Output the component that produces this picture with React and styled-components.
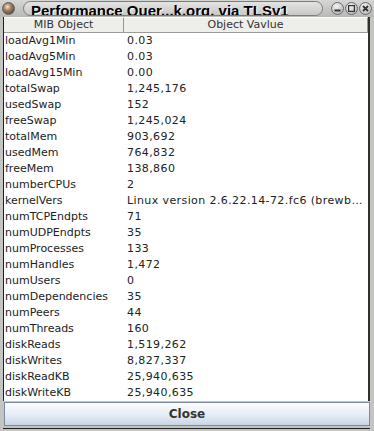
import React from "react";
import styled, { createGlobalStyle } from "styled-components";

const Global = createGlobalStyle`
  html, body { margin: 0; padding: 0; background: #c4c4c0; }
  body { width: 374px; height: 431px; overflow: hidden; }
`;

const rows = [
  ["loadAvg1Min", "0.03"],
  ["loadAvg5Min", "0.03"],
  ["loadAvg15Min", "0.00"],
  ["totalSwap", "1,245,176"],
  ["usedSwap", "152"],
  ["freeSwap", "1,245,024"],
  ["totalMem", "903,692"],
  ["usedMem", "764,832"],
  ["freeMem", "138,860"],
  ["numberCPUs", "2"],
  ["kernelVers", "Linux version 2.6.22.14-72.fc6 (brewbuilder@hs20-bc2-4.build.redhat.com)"],
  ["numTCPEndpts", "71"],
  ["numUDPEndpts", "35"],
  ["numProcesses", "133"],
  ["numHandles", "1,472"],
  ["numUsers", "0"],
  ["numDependencies", "35"],
  ["numPeers", "44"],
  ["numThreads", "160"],
  ["diskReads", "1,519,262"],
  ["diskWrites", "8,827,337"],
  ["diskReadKB", "25,940,635"],
  ["diskWriteKB", "25,940,635"],
];

const Window = styled.div`
  width: 374px;
  height: 431px;
  display: flex;
  flex-direction: column;
  background: #c4c4c0;
  box-sizing: border-box;
  font-family: "DejaVu Sans", sans-serif;
`;

const TitleBar = styled.div`
  height: 17px;
  display: flex;
  align-items: center;
  padding: 0 2px 0 2px;
  gap: 4px;
  background: linear-gradient(#d6d6d4, #b8b8b6);
  overflow: hidden;
`;

const Orb = styled.div`
  width: 13px;
  height: 13px;
  border-radius: 50%;
  flex: none;
  background: radial-gradient(circle at 40% 35%, #f0e4d8 0%, #a07c60 40%, #4a3020 100%);
  border: 1px solid #606060;
  box-sizing: border-box;
`;

const TitlePill = styled.div`
  flex: 1;
  height: 15px;
  margin-left: 4px;
  border: 1px solid #7c7c7c;
  border-radius: 8px;
  background: linear-gradient(#e4e4e2, #c8c8c6);
  display: flex;
  align-items: center;
  padding-left: 7px;
  box-sizing: border-box;
  overflow: hidden;
`;

const TitleText = styled.span`
  font-family: "Liberation Sans", Arial, sans-serif;
  font-weight: bold;
  font-size: 15px;
  line-height: 15px;
  color: #000;
  white-space: nowrap;
  text-shadow: 1px 1px 0 #fff;
  margin-top: 3px;
`;

const Controls = styled.div`
  display: flex;
  gap: 1px;
  margin-left: 4px;
`;

const CtrlBtn = styled.div`
  width: 13px;
  height: 13px;
  border-radius: 50%;
  border: 1px solid #6c6c6c;
  box-sizing: border-box;
  background: radial-gradient(circle at 40% 30%, #f4f4f4, #a8a8a8);
  display: flex;
  align-items: center;
  justify-content: center;
`;

const Body = styled.div`
  flex: 1;
  display: flex;
  flex-direction: column;
  padding: 0 4px 0 3px;
  min-height: 0;
`;

const Table = styled.div`
  flex: none;
  background: #fff;
  border-left: 1px solid #202020;
  border-right: 2px solid #303030;
  display: flex;
  flex-direction: column;
`;

const Header = styled.div`
  display: grid;
  grid-template-columns: 120px 1fr;
  height: 15px;
  background: #eeeeea;
  border-bottom: 1px solid #9a9a98;
`;

const HeadCell = styled.div`
  font-size: 11px;
  line-height: 14px;
  color: #333;
  text-align: center;
  border-right: ${(p) => (p.$last ? "1px solid #8a9aa8" : "1px solid #8a9aa8")};
  border-top: 1px solid #ffffff;
  box-sizing: border-box;
`;

const Row = styled.div`
  display: grid;
  grid-template-columns: 120px 1fr;
  height: 16px;
  align-items: center;
`;

const Cell = styled.div`
  font-size: 11px;
  line-height: 16px;
  color: #222;
  padding-left: ${(p) => (p.$value ? "3px" : "1px")};
  white-space: nowrap;
  overflow: hidden;
  text-overflow: ellipsis;
  letter-spacing: ${(p) => (p.$value ? "0.4px" : "0")};
`;

const CloseButton = styled.button`
  margin: 1px 0 0 1px;
  height: 24px;
  width: 366px;
  border: 1px solid #7a8aa0;
  background: linear-gradient(#fbfcfe 0%, #e8eef6 50%, #c8d6e8 100%);
  font-family: "DejaVu Sans", sans-serif;
  font-weight: bold;
  font-size: 12px;
  color: #333;
  padding: 0;
  flex: none;
`;

const BottomEdge = styled.div`
  margin-top: 2px;
  height: 1px;
  background: #202020;
  flex: none;
`;

export default function App() {
  return (
    <>
      <Global />
      <Window>
        <TitleBar>
          <Orb />
          <TitlePill>
            <TitleText>Performance Quer...k.org. via TLSv1</TitleText>
          </TitlePill>
          <Controls>
            <CtrlBtn>
              <svg width="7" height="7" viewBox="0 0 7 7">
                <rect x="0.5" y="4.5" width="6" height="2" fill="#333" />
              </svg>
            </CtrlBtn>
            <CtrlBtn>
              <svg width="7" height="7" viewBox="0 0 7 7">
                <rect x="0.5" y="0.5" width="6" height="6" fill="none" stroke="#333" strokeWidth="1.4" />
              </svg>
            </CtrlBtn>
            <CtrlBtn>
              <svg width="7" height="7" viewBox="0 0 7 7">
                <path d="M1 1 L6 6 M6 1 L1 6" stroke="#333" strokeWidth="1.8" />
              </svg>
            </CtrlBtn>
          </Controls>
        </TitleBar>
        <Body>
          <Table>
            <Header>
              <HeadCell>MIB Object</HeadCell>
              <HeadCell $last>Object Vavlue</HeadCell>
            </Header>
            {rows.map(([k, v]) => (
              <Row key={k}>
                <Cell>{k}</Cell>
                <Cell $value>{v}</Cell>
              </Row>
            ))}
          </Table>
          <CloseButton>Close</CloseButton>
          <BottomEdge />
        </Body>
      </Window>
    </>
  );
}
